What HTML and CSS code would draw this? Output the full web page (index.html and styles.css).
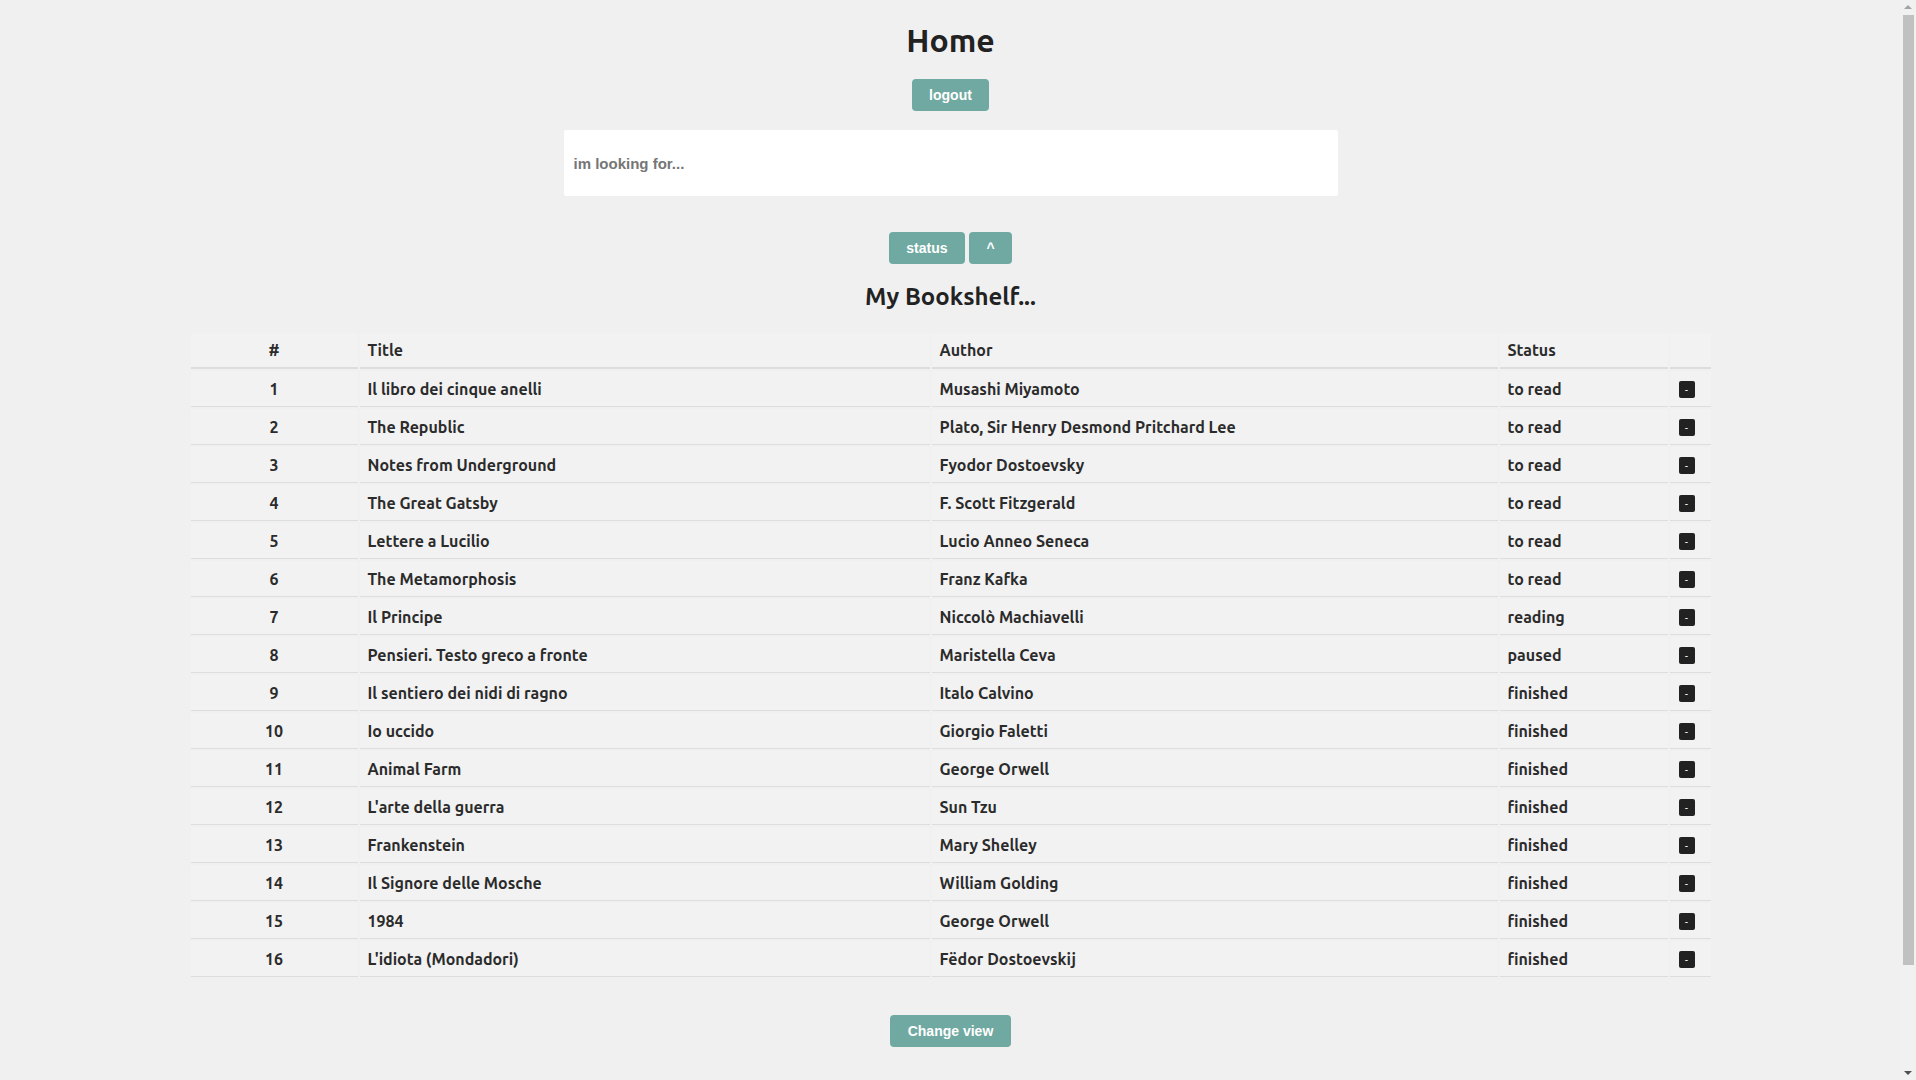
FILE: index.html
```html
<!DOCTYPE html>
<html lang="en">
<head>
<meta charset="utf-8">
<title>Home</title>
<link rel="stylesheet" href="styles.css">
</head>
<body>
<div class="page">
  <h1 class="page-title">Home</h1>
  <button class="btn">logout</button>
  <input class="search" type="text" placeholder="im looking for...">
  <div class="sort-bar">
    <button class="btn">status</button>
    <button class="btn">^</button>
  </div>
  <h2 class="section-title">My Bookshelf...</h2>
  <table class="shelf">
    <colgroup>
      <col class="c-num"><col class="c-title"><col class="c-author"><col class="c-status"><col class="c-act">
    </colgroup>
    <thead>
      <tr><th class="num">#</th><th>Title</th><th>Author</th><th>Status</th><th></th></tr>
    </thead>
    <tbody>
      <tr><td class="num">1</td><td>Il libro dei cinque anelli</td><td>Musashi Miyamoto</td><td>to read</td><td><button class="del">-</button></td></tr>
      <tr><td class="num">2</td><td>The Republic</td><td>Plato, Sir Henry Desmond Pritchard Lee</td><td>to read</td><td><button class="del">-</button></td></tr>
      <tr><td class="num">3</td><td>Notes from Underground</td><td>Fyodor Dostoevsky</td><td>to read</td><td><button class="del">-</button></td></tr>
      <tr><td class="num">4</td><td>The Great Gatsby</td><td>F. Scott Fitzgerald</td><td>to read</td><td><button class="del">-</button></td></tr>
      <tr><td class="num">5</td><td>Lettere a Lucilio</td><td>Lucio Anneo Seneca</td><td>to read</td><td><button class="del">-</button></td></tr>
      <tr><td class="num">6</td><td>The Metamorphosis</td><td>Franz Kafka</td><td>to read</td><td><button class="del">-</button></td></tr>
      <tr><td class="num">7</td><td>Il Principe</td><td>Niccolò Machiavelli</td><td>reading</td><td><button class="del">-</button></td></tr>
      <tr><td class="num">8</td><td>Pensieri. Testo greco a fronte</td><td>Maristella Ceva</td><td>paused</td><td><button class="del">-</button></td></tr>
      <tr><td class="num">9</td><td>Il sentiero dei nidi di ragno</td><td>Italo Calvino</td><td>finished</td><td><button class="del">-</button></td></tr>
      <tr><td class="num">10</td><td>Io uccido</td><td>Giorgio Faletti</td><td>finished</td><td><button class="del">-</button></td></tr>
      <tr><td class="num">11</td><td>Animal Farm</td><td>George Orwell</td><td>finished</td><td><button class="del">-</button></td></tr>
      <tr><td class="num">12</td><td>L'arte della guerra</td><td>Sun Tzu</td><td>finished</td><td><button class="del">-</button></td></tr>
      <tr><td class="num">13</td><td>Frankenstein</td><td>Mary Shelley</td><td>finished</td><td><button class="del">-</button></td></tr>
      <tr><td class="num">14</td><td>Il Signore delle Mosche</td><td>William Golding</td><td>finished</td><td><button class="del">-</button></td></tr>
      <tr><td class="num">15</td><td>1984</td><td>George Orwell</td><td>finished</td><td><button class="del">-</button></td></tr>
      <tr><td class="num">16</td><td>L'idiota (Mondadori)</td><td>Fëdor Dostoevskij</td><td>finished</td><td><button class="del">-</button></td></tr>
    </tbody>
  </table>
  <button class="btn btn-view">Change view</button>
</div>
<div class="scrollbar" aria-hidden="true">
  <span class="sb-arrow sb-up"></span>
  <span class="sb-thumb"></span>
  <span class="sb-arrow sb-down"></span>
</div>
</body>
</html>
```

FILE: styles.css
```css
html, body {
  margin: 0;
  padding: 0;
  background: #f0f0f0;
}
body {
  font-family: "Ubuntu", "Lato", "Noto Sans", sans-serif;
  color: #2b2b2b;
}
.page {
  display: flex;
  flex-direction: column;
  align-items: center;
  margin-right: 15px;
  padding: 20px 0 147px;
}
.page-title {
  margin: 0;
  font-size: 32px;
  line-height: 40px;
  font-weight: 700;
  color: #222;
}
.btn {
  font-family: "Liberation Sans", Arial, sans-serif;
  font-size: 14px;
  font-weight: 700;
  color: #fff;
  background: #6fa9a1;
  border: none;
  border-radius: 4px;
  height: 32px;
  padding: 0 17.5px;
  cursor: pointer;
}
.page-title + .btn {
  margin-top: 19px;
}
.search {
  margin-top: 19px;
  width: 774px;
  height: 66px;
  box-sizing: border-box;
  border: none;
  border-radius: 2px;
  background: #fff;
  padding: 0 10px;
  font-family: "Liberation Sans", Arial, sans-serif;
  font-size: 15px;
  font-weight: 700;
  color: #333;
  outline: none;
}
.search::placeholder {
  color: #767676;
}
.sort-bar {
  margin-top: 36px;
  display: flex;
  gap: 4px;
}
.section-title {
  margin: 18px 0 0;
  font-size: 24px;
  line-height: 30px;
  font-weight: 700;
  color: #222;
}
.shelf {
  margin-top: 19px;
  width: 1524px;
  table-layout: fixed;
  border-spacing: 2px;
  font-size: 16px;
  font-weight: 700;
  color: #2b2b2b;
}
.c-num { width: 167px; }
.c-title { width: 570px; }
.c-author { width: 566px; }
.c-status { width: 168px; }
.c-act { width: 41px; }
.shelf th,
.shelf td {
  background: #f2f2f2;
  text-align: left;
  padding: 0 8px;
  height: 36px;
  box-sizing: border-box;
  white-space: nowrap;
}
.shelf th {
  border-bottom: 2px solid #dddddd;
}
.shelf td {
  border-bottom: 1px solid #dddddd;
}
.shelf .num {
  text-align: center;
}
.del {
  display: inline-block;
  vertical-align: middle;
  width: 16px;
  height: 17px;
  padding: 0;
  margin: 1px 0 0 1px;
  border: none;
  border-radius: 2px;
  background: #222;
  color: #fff;
  font-family: "Liberation Sans", Arial, sans-serif;
  font-size: 10px;
  font-weight: 400;
  line-height: 17px;
  cursor: pointer;
}
.btn-view {
  margin-top: 36px;
}
.scrollbar {
  position: fixed;
  top: 0;
  right: 0;
  width: 15px;
  height: 100vh;
  background: #f1f1f1;
}
.sb-thumb {
  position: absolute;
  top: 15px;
  left: 2px;
  width: 11px;
  height: 950px;
  background: #c1c1c1;
}
.sb-arrow {
  position: absolute;
  left: 3px;
  width: 0;
  height: 0;
  border-left: 4.5px solid transparent;
  border-right: 4.5px solid transparent;
}
.sb-up {
  top: 5px;
  border-bottom: 4.5px solid #a3a3a3;
}
.sb-down {
  bottom: 5px;
  border-top: 4.5px solid #505050;
}
```
